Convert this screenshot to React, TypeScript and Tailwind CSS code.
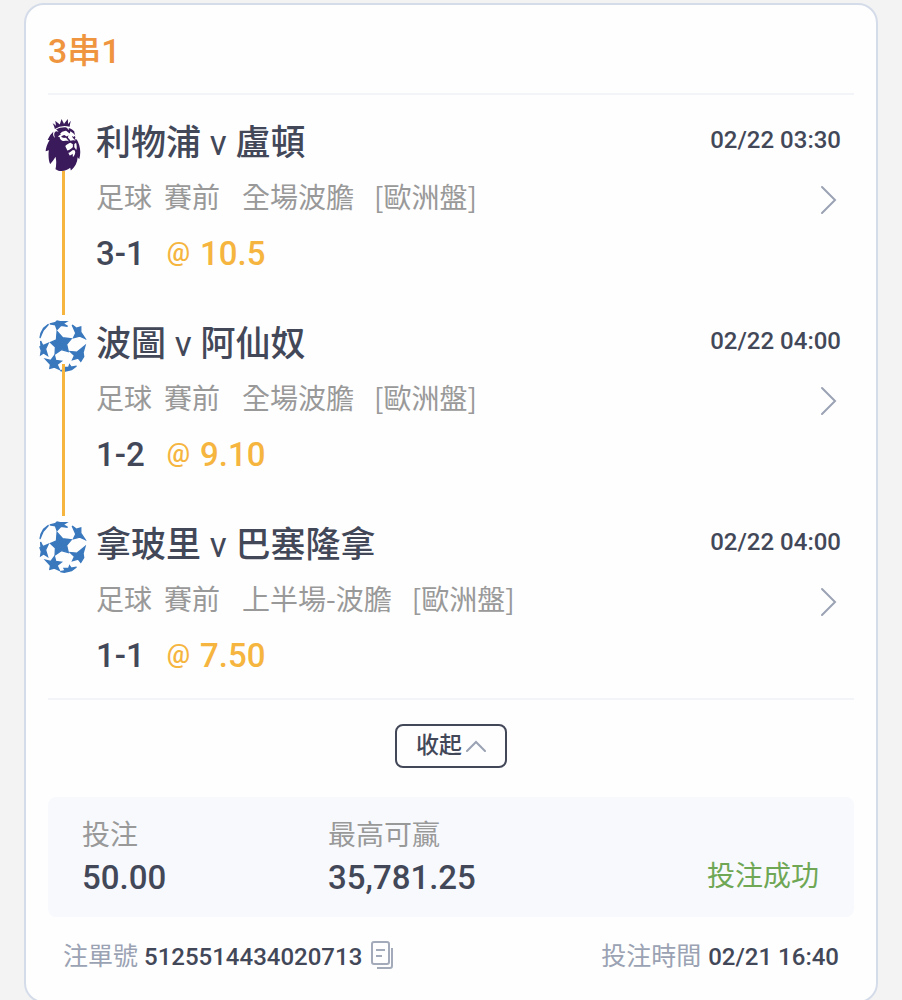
import React, { useState } from 'react';
import { SiPremierleague } from 'react-icons/si';

interface Leg {
  id: number;
  league: 'epl' | 'ucl';
  home: string;
  away: string;
  time: string;
  market: string;
  pick: string;
  odds: string;
}

const legs: Leg[] = [
  { id: 1, league: 'epl', home: '利物浦', away: '盧頓', time: '02/22 03:30', market: '全場波膽', pick: '3-1', odds: '10.5' },
  { id: 2, league: 'ucl', home: '波圖', away: '阿仙奴', time: '02/22 04:00', market: '全場波膽', pick: '1-2', odds: '9.10' },
  { id: 3, league: 'ucl', home: '拿玻里', away: '巴塞隆拿', time: '02/22 04:00', market: '上半場-波膽', pick: '1-1', odds: '7.50' },
];

function StarBall() {
  return (
    <svg viewBox="8 5 144 158" className="h-[52px] w-12 shrink-0" fill="#3a78bd" stroke="#3a78bd" strokeWidth="4">
      <path d="M62 40 79 59 105 62 91 79 96 101 75 95 56 108 57 87 42 73 60 65Z" />
      <path d="M40 17 56 13 62 8 71 10 90 10 80 16 94 24 74 21 62 34 57 20Z" />
      <path d="M108 20 121 30 134 26 134 42 147 61 131 54 112 59 119 45Z" />
      <path d="M36 18 25 31 20 36 14 50 10 60 13 45 21 30Z" />
      <path d="M12 69 19 83 35 76 27 93 33 113 21 105 12 111 14 98 10 86 13 84Z" />
      <path d="M54 113 58 128 75 130 62 140 69 155 54 148 40 152 42 140 27 124 43 128Z" />
      <path d="M147 83 141 104 143 116 134 131 126 121 109 126 115 113 102 101 122 103Z" />
      <path d="M100 141 105 148 121 145 106 156 84 161 72 159 87 156 83 149 97 149Z" />
    </svg>
  );
}

function CopyIcon() {
  return (
    <svg viewBox="0 0 24 28" className="h-7 w-6" fill="none" stroke="#a3abba" strokeWidth="2">
      <rect x="2" y="1" width="17" height="22" rx="2" />
      <path d="M22 7v18a2 2 0 0 1-2 2H7" />
      <path d="M6 9h9M6 15h6" />
    </svg>
  );
}

function LegRow({ leg, last }: { leg: Leg; last: boolean }) {
  return (
    <li className="flex gap-2 pl-3 pr-[35px]">
      <div className="flex w-[50px] shrink-0 flex-col items-center pt-[5px]">
        {leg.league === 'epl' ? (
          <SiPremierleague preserveAspectRatio="none" className="h-[52px] w-11 shrink-0 text-[#3a1a5b]" />
        ) : (
          <StarBall />
        )}
        {!last && (
          <div className={`relative w-[3px] flex-1 bg-[#f5b53f] ${leg.league === 'ucl' ? '-mt-2' : ''}`}></div>
        )}
      </div>

      <div className={`min-w-0 flex-1 ${last ? 'pb-[14px]' : 'pb-[33px]'}`}>
        <div className="flex h-14 items-center justify-between">
          <h3 className="pt-1 text-[35px] font-medium text-[#434859]">
            {leg.home} <span className="font-normal">v</span> {leg.away}
          </h3>
          <time className="pb-1 text-[24px] font-medium text-[#434859]">{leg.time}</time>
        </div>
        <div className="flex h-14 items-center justify-between">
          <p className="flex pb-1 font-['Noto_Sans_CJK_TC',sans-serif] text-[28px] text-[#999999]">
            <span className="mr-3">足球</span>
            <span className="mr-[22px]">賽前</span>
            <span className="mr-5">{leg.market}</span>
            <span>[歐洲盤]</span>
          </p>
          <button type="button" aria-label={`${leg.home} v ${leg.away}`} className="mr-1 mt-1">
            <svg viewBox="0 0 18 30" className="h-[30px] w-[18px]" fill="none" stroke="#9aa2b3" strokeWidth="2" strokeLinecap="round">
              <path d="M3 2 16 15 3 28" />
            </svg>
          </button>
        </div>
        <div className="flex h-14 items-center text-[33px] font-medium">
          <span className="mr-[22px] text-[#434859]">{leg.pick}</span>
          <span className="mr-[10px] pb-1 text-[26px] text-[#f5b53f]">@</span>
          <span className="text-[#f5b53f]">{leg.odds}</span>
        </div>
      </div>
    </li>
  );
}

export default function App() {
  const [open, setOpen] = useState(true);

  return (
    <div className="bg-[#f3f3f4] px-6 pt-[3px] font-['Roboto','Noto_Sans_CJK_TC',sans-serif]">
      <section className="rounded-[20px] border-2 border-[#d5dce9] bg-[#fefefe] pb-1">
        <h2 className="mx-[22px] flex h-[90px] items-center border-b-2 border-[#f3f4f8] pt-1 text-[34px] font-medium text-[#f0953f]">
          3串1
        </h2>

        {open && (
          <ul className="pt-[19px]">
            {legs.map((leg, index) => (
              <LegRow key={leg.id} leg={leg} last={index === legs.length - 1} />
            ))}
          </ul>
        )}

        <div className="mx-[22px] flex justify-center border-t-2 border-[#f3f4f8] pb-[29px] pt-6">
          <button
            type="button"
            onClick={() => setOpen(!open)}
            className="flex h-11 w-28 items-center justify-center gap-1 rounded-lg border-2 border-[#434859] text-[23px] font-medium text-[#434859]"
          >
            {open ? '收起' : '展開'}
            <svg
              viewBox="0 0 20 12"
              className={`h-3 w-5 ${open ? '' : 'rotate-180'}`}
              fill="none"
              stroke="#9aa2b3"
              strokeWidth="2"
              strokeLinecap="round"
            >
              <path d="M1 11 10 2 19 11" />
            </svg>
          </button>
        </div>

        <dl className="mx-[22px] flex h-[120px] items-center rounded-lg bg-[#f8f9fd] pl-[34px] pr-[35px]">
          <div className="w-[246px]">
            <dt className="text-[28px] leading-[42px] text-[#999999]">投注</dt>
            <dd className="text-[33px] font-medium leading-[42px] text-[#434859]">50.00</dd>
          </div>
          <div className="flex-1">
            <dt className="text-[28px] leading-[42px] text-[#999999]">最高可贏</dt>
            <dd className="text-[33px] font-medium leading-[42px] text-[#434859]">35,781.25</dd>
          </div>
          <dd className="mt-[40px] text-[28px] text-[#6fa755]">投注成功</dd>
        </dl>

        <footer className="flex h-20 items-center justify-between pl-[37px] pr-[37px] text-[25px]">
          <div className="flex items-center">
            <span className="mr-[6px] text-[#9aa2b3]">注單號</span>
            <span className="mr-2 text-[24px] font-medium text-[#434859]">5125514434020713</span>
            <button type="button" aria-label="複製" className="pb-1">
              <CopyIcon />
            </button>
          </div>
          <div className="flex items-center">
            <span className="mr-[7px] text-[#9aa2b3]">投注時間</span>
            <time className="text-[24px] font-medium text-[#434859]">02/21 16:40</time>
          </div>
        </footer>
      </section>
    </div>
  );
}
